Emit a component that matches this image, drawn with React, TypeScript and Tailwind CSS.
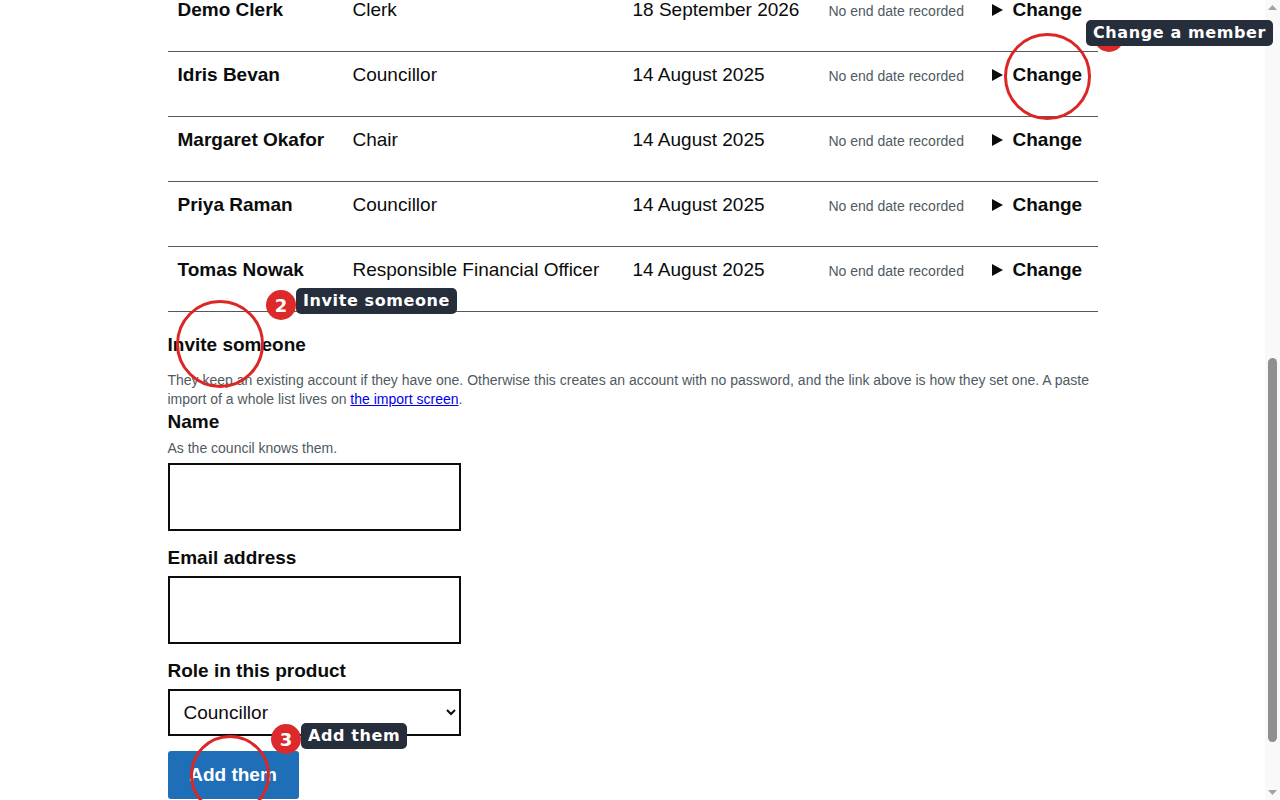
import React, { useLayoutEffect, useRef } from "react";

type Member = { name: string; role: string; start: string };

const before: Member[] = [
  { name: "Aled Roberts", role: "Councillor", start: "14 August 2025" },
  { name: "Bethan Hughes", role: "Vice Chair", start: "14 August 2025" },
  { name: "Catrin Lloyd", role: "Councillor", start: "14 August 2025" },
];

const shown: Member[] = [
  { name: "Demo Clerk", role: "Clerk", start: "18 September 2026" },
  { name: "Idris Bevan", role: "Councillor", start: "14 August 2025" },
  { name: "Margaret Okafor", role: "Chair", start: "14 August 2025" },
  { name: "Priya Raman", role: "Councillor", start: "14 August 2025" },
  { name: "Tomas Nowak", role: "Responsible Financial Officer", start: "14 August 2025" },
];

function Row({ m, rowRef }: { m: Member; rowRef?: React.Ref<HTMLDivElement> }) {
  return (
    <div
      ref={rowRef}
      className="grid grid-cols-[175px_280px_196px_163px_116px] h-[65px] border-b border-[#505a5f] text-[19px] leading-[25px] text-[#0b0c0c]"
    >
      <div className="pl-[10px] pt-[10px] font-bold">{m.name}</div>
      <div className="pl-[10px] pt-[10px]">{m.role}</div>
      <div className="pl-[10px] pt-[10px]">{m.start}</div>
      <div className="pl-[10px] pt-[15px] text-[14px] leading-[19px] text-[#505a5f]">No end date recorded</div>
      <div className="pl-[10px] pt-[10px] font-bold flex items-start">
        <span className="flex items-center h-[25px] w-[21px]">
          <svg width="11" height="12" viewBox="0 0 11 12">
            <polygon points="0,0 11,6 0,12" fill="#0b0c0c" />
          </svg>
        </span>
        <span>Change</span>
      </div>
    </div>
  );
}

function Badge({ n, x, y }: { n: number; x: number; y: number }) {
  return (
    <div
      className="absolute w-[30px] h-[30px] rounded-full bg-[#dc2a2a] text-white flex items-center justify-center text-[18px] font-bold"
      style={{ left: x - 15, top: y - 15, fontFamily: '"DejaVu Sans", sans-serif' }}
    >
      {n}
    </div>
  );
}

function Label({ text, x, y }: { text: string; x: number; y: number }) {
  return (
    <div
      className="absolute h-[26px] px-[7px] rounded-[5px] bg-[#262d3b] text-white text-[16px] font-bold leading-[26px] whitespace-nowrap tracking-[0.6px]"
      style={{ left: x, top: y, fontFamily: '"DejaVu Sans", sans-serif' }}
    >
      {text}
    </div>
  );
}

function Ring({ x, y, d }: { x: number; y: number; d: number }) {
  return (
    <div
      className="absolute rounded-full border-[3px] border-[#dc2626]"
      style={{ left: x - d / 2, top: y - d / 2, width: d, height: d }}
    />
  );
}

function ScrollBar() {
  return (
    <aside className="w-[15px] shrink-0 h-full flex flex-col bg-[#f9f9f9]">
      <div className="h-[15px] flex items-center justify-center">
        <svg width="9" height="5" viewBox="0 0 9 5">
          <polygon points="0,5 4.5,0 9,5" fill="#a3a3a3" />
        </svg>
      </div>
      <div className="flex-1 pt-[343px] px-[3px]">
        <div className="h-[384px] rounded-full bg-[#8f8f8f]" />
      </div>
      <div className="h-[15px] flex items-center justify-center">
        <svg width="9" height="5" viewBox="0 0 9 5">
          <polygon points="0,0 4.5,5 9,0" fill="#a3a3a3" />
        </svg>
      </div>
    </aside>
  );
}

export default function App() {
  const scroller = useRef<HTMLDivElement>(null);
  const demo = useRef<HTMLDivElement>(null);

  useLayoutEffect(() => {
    const s = scroller.current;
    const r = demo.current;
    if (!s || !r) return;
    const top = r.getBoundingClientRect().top - s.getBoundingClientRect().top + s.scrollTop;
    s.scrollTop = top + 13;
  }, []);

  return (
    <div
      className="relative h-screen w-full overflow-hidden bg-white flex"
      style={{ fontFamily: '"Liberation Sans", Arial, sans-serif' }}
    >
      <div ref={scroller} className="h-full flex-1 min-w-0 overflow-hidden">
        <header className="h-[64px] bg-[#0b0c0c] text-white">
          <div className="w-[930px] mx-auto h-full flex items-center text-[20px] font-bold">
            Council Toolkit
          </div>
        </header>
        <main className="w-[930px] mx-auto pt-[40px] pb-[92px] text-[#0b0c0c]">
          <h1 className="text-[32px] leading-[40px] font-bold mb-[16px]">Members</h1>
          <p className="text-[19px] leading-[25px] mb-[30px]">
            Everyone who can sign in to this council&apos;s workspace.
          </p>
          <h2 className="text-[19px] leading-[25px] font-bold mb-[10px]">Sign-in link</h2>
          <p className="text-[14px] leading-[19px] text-[#505a5f] mb-[10px]">
            Send this link to a new member so they can set a password.
          </p>
          <div className="h-[48px] border-2 border-[#0b0c0c] px-[10px] flex items-center text-[16px] mb-[40px]">
            https://toolkit.local/set-password
          </div>
          <h2 className="text-[24px] leading-[30px] font-bold mb-[16px]">Current members</h2>
          <div className="grid grid-cols-[175px_280px_196px_163px_116px] h-[45px] border-b border-[#505a5f] text-[19px] leading-[25px] font-bold">
            <div className="pl-[10px] pt-[10px]">Name</div>
            <div className="pl-[10px] pt-[10px]">Role</div>
            <div className="pl-[10px] pt-[10px]">Started</div>
            <div className="pl-[10px] pt-[10px]">Ended</div>
            <div />
          </div>
          {before.map((m) => (
            <Row key={m.name} m={m} />
          ))}
          {shown.map((m, i) => (
            <Row key={m.name} m={m} rowRef={i === 0 ? demo : undefined} />
          ))}

          <section className="mt-[20px] flex flex-col">
            <h2 className="text-[19px] leading-[25px] font-bold">Invite someone</h2>
            <p className="mt-[14px] text-[14px] leading-[19px] text-[#505a5f]">
              They keep an existing account if they have one. Otherwise this creates an account with no password, and the link above is how they set one. A paste import of a whole list lives on{" "}
              <a href="#" className="text-[#0000ee] underline">the import screen</a>.
            </p>
            <label className="text-[19px] leading-[25px] font-bold">Name</label>
            <span className="mt-[5px] text-[14px] leading-[19px] text-[#505a5f]">As the council knows them.</span>
            <input className="mt-[5px] w-[293px] h-[68px] border-2 border-[#0b0c0c] bg-white" />
            <label className="mt-[14px] text-[19px] leading-[25px] font-bold">Email address</label>
            <input className="mt-[6px] w-[293px] h-[68px] border-2 border-[#0b0c0c] bg-white" />
            <label className="mt-[14px] text-[19px] leading-[25px] font-bold">Role in this product</label>
            <select
              defaultValue="Councillor"
              className="mt-[6px] w-[293px] h-[47px] border-2 border-[#0b0c0c] bg-white text-[19px] pl-[10px] pr-[2px] text-[#0b0c0c]"
            >
              <option>Councillor</option>
              <option>Clerk</option>
              <option>Chair</option>
              <option>Responsible Financial Officer</option>
            </select>
            <button className="mt-[15px] w-[131px] h-[48px] rounded-[3px] bg-[#1f6fb8] text-white text-[19px] font-bold">
              Add them
            </button>
          </section>
        </main>
      </div>

      <ScrollBar />

      <div className="absolute inset-0 pointer-events-none">
        <Ring x={1047} y={76} d={87} />
        <Ring x={220} y={344} d={88} />
        <Ring x={230} y={775} d={80} />
        <Badge n={1} x={1109} y={37} />
        <Badge n={2} x={281} y={305} />
        <Badge n={3} x={286} y={739} />
        <Label text="Change a member" x={1086} y={20} />
        <Label text="Invite someone" x={296} y={288} />
        <Label text="Add them" x={301} y={723} />
      </div>
    </div>
  );
}
